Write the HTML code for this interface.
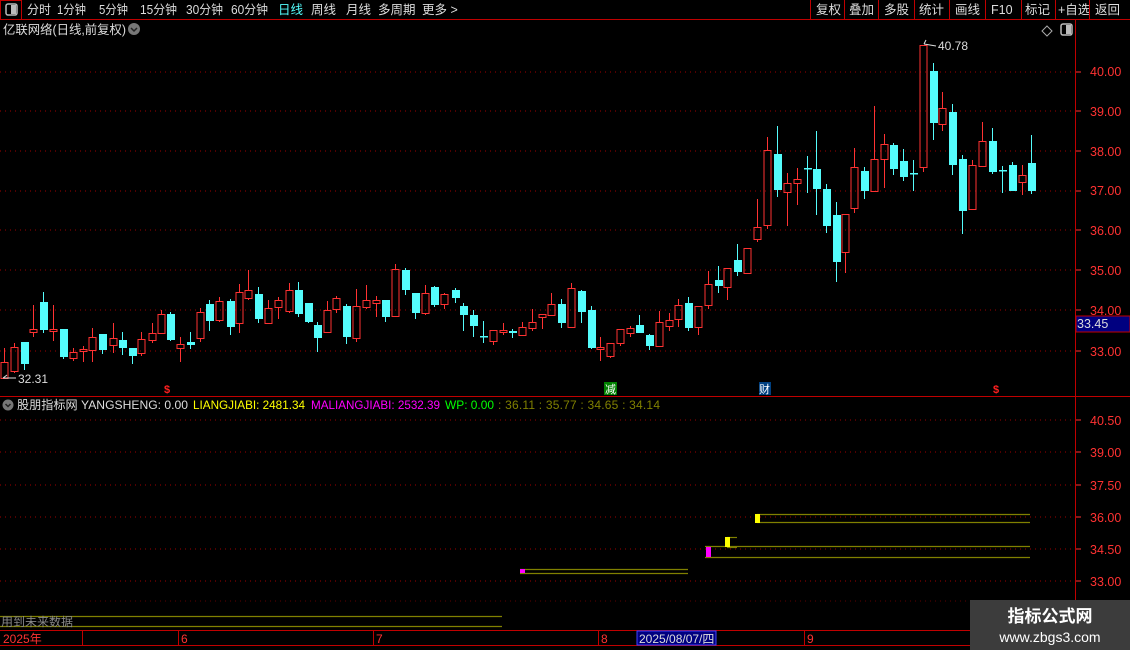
<!DOCTYPE html>
<html><head><meta charset="utf-8"><style>
html,body{margin:0;padding:0;background:#000;width:1130px;height:650px;overflow:hidden;font-family:"Liberation Sans","Noto Sans CJK SC",sans-serif;}
svg{position:absolute;left:0;top:0}
</style></head><body>
<svg width="1130" height="650" xmlns="http://www.w3.org/2000/svg" font-family="Liberation Sans, Noto Sans CJK SC, sans-serif">
<rect width="1130" height="650" fill="#000"/>
<line x1="0" y1="19.5" x2="1130" y2="19.5" stroke="#c00000"/>
<rect x="0.5" y="0.5" width="21" height="19" fill="none" stroke="#c00000"/>
<rect x="6" y="4" width="11" height="11" rx="2" fill="none" stroke="#bbb" stroke-width="1.5"/><rect x="11" y="5" width="5" height="9" fill="#bbb"/>
<g font-size="12.5" fill="#ddd">
<text x="27" y="14" textLength="24" lengthAdjust="spacingAndGlyphs">分时</text><text x="57" y="14" textLength="29" lengthAdjust="spacingAndGlyphs">1分钟</text><text x="99" y="14" textLength="29" lengthAdjust="spacingAndGlyphs">5分钟</text><text x="140" y="14" textLength="37" lengthAdjust="spacingAndGlyphs">15分钟</text><text x="186" y="14" textLength="37" lengthAdjust="spacingAndGlyphs">30分钟</text><text x="231" y="14" textLength="37" lengthAdjust="spacingAndGlyphs">60分钟</text>
<text x="278" y="14" fill="#54fcfc">日线</text><text x="311" y="14">周线</text><text x="346" y="14">月线</text><text x="378" y="14">多周期</text><text x="422" y="14">更多 &gt;</text>
<text x="816" y="14">复权</text><text x="849" y="14">叠加</text><text x="884" y="14">多股</text><text x="919" y="14">统计</text><text x="955" y="14">画线</text><text x="991" y="14">F10</text><text x="1025" y="14">标记</text><text x="1058" y="14">+自选</text><text x="1095" y="14">返回</text>
</g>
<g stroke="#c00000"><line x1="810.5" y1="0" x2="810.5" y2="19"/><line x1="844.5" y1="0" x2="844.5" y2="19"/><line x1="878.5" y1="0" x2="878.5" y2="19"/><line x1="914.5" y1="0" x2="914.5" y2="19"/><line x1="949.5" y1="0" x2="949.5" y2="19"/><line x1="985.5" y1="0" x2="985.5" y2="19"/><line x1="1021.5" y1="0" x2="1021.5" y2="19"/><line x1="1055.5" y1="0" x2="1055.5" y2="19"/><line x1="1089.5" y1="0" x2="1089.5" y2="19"/></g>
<text x="3" y="34" font-size="12.5" fill="#ddd" textLength="123" lengthAdjust="spacingAndGlyphs">亿联网络(日线,前复权)</text>
<circle cx="134" cy="29" r="6" fill="#777"/><path d="M131 28 L134 31 L137 28" stroke="#222" stroke-width="1.5" fill="none"/>
<path d="M1047 26 L1052 31 L1047 36 L1042 31 Z" fill="none" stroke="#aaa"/>
<rect x="1061" y="24" width="11" height="11" rx="2" fill="none" stroke="#bbb" stroke-width="1.5"/><rect x="1066" y="25" width="5" height="9" fill="#bbb"/>
<line x1="1075.5" y1="20" x2="1075.5" y2="630" stroke="#c00000"/>
<line x1="0" y1="396.5" x2="1130" y2="396.5" stroke="#c00000"/>
<line x1="0" y1="630.5" x2="1130" y2="630.5" stroke="#c00000"/>
<line x1="0" y1="645.5" x2="1130" y2="645.5" stroke="#c00000"/>
<g stroke="#a00000" stroke-dasharray="1,4">
<line x1="0" y1="72" x2="1075" y2="72"/><line x1="0" y1="111" x2="1075" y2="111"/><line x1="0" y1="151" x2="1075" y2="151"/><line x1="0" y1="191" x2="1075" y2="191"/><line x1="0" y1="230" x2="1075" y2="230"/><line x1="0" y1="270" x2="1075" y2="270"/><line x1="0" y1="310" x2="1075" y2="310"/><line x1="0" y1="351" x2="1075" y2="351"/>
<line x1="0" y1="420" x2="1075" y2="420"/><line x1="0" y1="452" x2="1075" y2="452"/><line x1="0" y1="485" x2="1075" y2="485"/><line x1="0" y1="517" x2="1075" y2="517"/><line x1="0" y1="549" x2="1075" y2="549"/><line x1="0" y1="581" x2="1075" y2="581"/>
</g>
<g font-size="12.5" fill="#ff3232">
<text x="1090" y="76">40.00</text><text x="1090" y="116">39.00</text><text x="1090" y="156">38.00</text><text x="1090" y="195">37.00</text><text x="1090" y="235">36.00</text><text x="1090" y="275">35.00</text><text x="1090" y="315">34.00</text><text x="1090" y="356">33.00</text>
<text x="1090" y="425">40.50</text><text x="1090" y="457">39.00</text><text x="1090" y="490">37.50</text><text x="1090" y="522">36.00</text><text x="1090" y="554">34.50</text><text x="1090" y="586">33.00</text>
</g>
<g stroke="#ff3232"><line x1="1076" y1="72" x2="1081" y2="72"/><line x1="1076" y1="111" x2="1081" y2="111"/><line x1="1076" y1="151" x2="1081" y2="151"/><line x1="1076" y1="191" x2="1081" y2="191"/><line x1="1076" y1="230" x2="1081" y2="230"/><line x1="1076" y1="270" x2="1081" y2="270"/><line x1="1076" y1="310" x2="1081" y2="310"/><line x1="1076" y1="351" x2="1081" y2="351"/><line x1="1076" y1="420" x2="1081" y2="420"/><line x1="1076" y1="452" x2="1081" y2="452"/><line x1="1076" y1="485" x2="1081" y2="485"/><line x1="1076" y1="517" x2="1081" y2="517"/><line x1="1076" y1="549" x2="1081" y2="549"/><line x1="1076" y1="581" x2="1081" y2="581"/></g>
<rect x="1076" y="316" width="54" height="16" fill="#000080" stroke="#c00000"/>
<text x="1077" y="328" font-size="12.5" fill="#ddd">33.45</text>
<g id="candles"></g>
<text x="18" y="383" font-size="12" fill="#ddd">32.31</text><path d="M3 378 L16 378 M3 378 L7 375" stroke="#ddd" fill="none"/>
<text x="938" y="50" font-size="12" fill="#ddd">40.78</text><path d="M924 44 L936 46 M924 44 L926 40" stroke="#ddd" fill="none"/>
<text x="164" y="393" font-size="11" fill="#ff2020" font-weight="bold">$</text>
<text x="993" y="393" font-size="11" fill="#ff2020" font-weight="bold">$</text>
<rect x="604" y="382" width="13" height="13" fill="#008000"/><text x="605" y="393" font-size="11" fill="#fff">减</text>
<rect x="759" y="382" width="12" height="13" fill="#004080"/><text x="759" y="393" font-size="11" fill="#fff">财</text>
<circle cx="8" cy="405" r="5.5" fill="#777"/><path d="M5.5 404 L8 406.5 L10.5 404" stroke="#222" stroke-width="1.5" fill="none"/>
<g font-size="12">
<text x="17" y="409" fill="#ddd" textLength="171" lengthAdjust="spacingAndGlyphs">股朋指标网 YANGSHENG: 0.00</text>
<text x="193" y="409" fill="#ffff00" textLength="112" lengthAdjust="spacingAndGlyphs">LIANGJIABI: 2481.34</text>
<text x="311" y="409" fill="#ff00ff" textLength="129" lengthAdjust="spacingAndGlyphs">MALIANGJIABI: 2532.39</text>
<text x="445" y="409" fill="#00ff00" textLength="49" lengthAdjust="spacingAndGlyphs">WP: 0.00</text>
<text x="498" y="409" fill="#808000" textLength="162" lengthAdjust="spacing">: 36.11 : 35.77 : 34.65 : 34.14</text>
</g>
<g stroke="#808000" stroke-width="1.2">
<line x1="757" y1="514.5" x2="1030" y2="514.5"/><line x1="757" y1="522.5" x2="1030" y2="522.5"/>
<line x1="727" y1="537.5" x2="737" y2="537.5"/><line x1="727" y1="547.5" x2="737" y2="547.5"/>
<line x1="705" y1="546.5" x2="1030" y2="546.5"/><line x1="705" y1="557.5" x2="1030" y2="557.5"/>
<line x1="520" y1="569.5" x2="688" y2="569.5"/><line x1="520" y1="573.5" x2="688" y2="573.5"/>
<line x1="0" y1="616.5" x2="502" y2="616.5"/><line x1="0" y1="626.5" x2="502" y2="626.5"/>
</g>
<rect x="755" y="514" width="5" height="9" fill="#ffff00"/>
<rect x="725" y="537" width="5" height="10" fill="#ffff00"/>
<rect x="706" y="547" width="5" height="10" fill="#ff00ff"/>
<rect x="520" y="569" width="5" height="4" fill="#ff00ff"/>
<line x1="0" y1="601" x2="1075" y2="601" stroke="#a00000" stroke-dasharray="1,4" opacity="0.6"/>
<text x="1" y="626" font-size="12" fill="#888">用到未来数据</text>
<g stroke="#c00000"><line x1="82.5" y1="630" x2="82.5" y2="645"/><line x1="178.5" y1="630" x2="178.5" y2="645"/><line x1="373.5" y1="630" x2="373.5" y2="645"/><line x1="598.5" y1="630" x2="598.5" y2="645"/><line x1="804.5" y1="630" x2="804.5" y2="645"/></g>
<g font-size="12" fill="#ff3232"><text x="3" y="643">2025年</text><text x="181" y="643">6</text><text x="376" y="643">7</text><text x="601" y="643">8</text><text x="807" y="643">9</text></g>
<rect x="637" y="631" width="79" height="14" fill="#000080" stroke="#4040ff"/>
<text x="639" y="643" font-size="12" fill="#ddd">2025/08/07/四</text>
<rect x="970" y="600" width="160" height="50" fill="#3c3c3c"/>
<text x="1050" y="622" font-size="17" font-weight="bold" fill="#fff" text-anchor="middle">指标公式网</text>
<text x="1050" y="642" font-size="14" fill="#fff" text-anchor="middle">www.zbgs3.com</text>
</svg>
<script>
var D=[
[4,362,378,348,378,'r'],[14,347,371,343,373,'r'],[24,342,364,342,370,'c'],[33,329,332,305,337,'r'],[43,302,330,292,333,'c'],[53,329,331,305,341,'r'],[63,329,357,329,359,'c'],[73,352,358,348,361,'r'],[83,349,351,346,362,'r'],[92,337,350,328,362,'r'],[102,334,350,334,354,'c'],[113,338,345,323,353,'r'],[122,340,348,332,355,'c'],[132,348,356,348,364,'c'],[141,339,353,332,356,'r'],[152,333,340,323,343,'r'],[161,314,333,310,333,'r'],[170,314,340,312,341,'c'],[180,344,348,337,362,'r'],[190,342,345,332,349,'c'],[200,312,338,308,342,'r'],[209,304,321,300,331,'c'],[219,301,320,297,322,'r'],[230,301,327,299,335,'c'],[239,292,323,284,333,'r'],[248,290,298,270,300,'r'],[258,294,319,287,323,'c'],[268,308,323,300,324,'r'],[278,300,307,297,319,'r'],[289,290,311,283,313,'r'],[298,290,314,282,317,'c'],[308,303,322,303,323,'c'],[317,325,338,322,352,'c'],[327,310,332,301,332,'r'],[336,298,309,296,313,'r'],[346,306,337,304,344,'c'],[356,306,338,289,342,'r'],[366,300,307,285,309,'r'],[376,300,303,296,317,'r'],[385,300,317,300,322,'c'],[395,269,316,264,316,'r'],[405,270,290,268,295,'c'],[415,293,313,293,319,'c'],[425,293,313,285,315,'r'],[434,287,305,286,307,'c'],[444,294,304,293,309,'r'],[455,290,298,288,303,'c'],[463,306,315,303,331,'c'],[473,315,326,310,337,'c'],[483,336,336,321,343,'c'],[493,330,341,330,345,'r'],[503,330,332,323,335,'r'],[512,331,333,329,338,'c'],[522,327,335,322,336,'r'],[532,322,328,309,331,'r'],
[542,314,317,314,329,'r'],[551,304,315,293,315,'r'],[561,304,323,299,328,'c'],[571,288,327,283,327,'r'],[581,291,312,290,323,'c'],[591,310,348,306,349,'c'],[600,347,349,337,361,'r'],[610,343,356,343,358,'r'],[620,329,343,329,346,'r'],[630,328,333,326,337,'r'],[639,325,333,315,333,'c'],[649,335,346,334,350,'c'],[659,322,346,311,346,'r'],[669,320,326,313,331,'r'],[678,305,319,299,327,'r'],[688,303,328,297,331,'c'],[698,306,327,306,335,'r'],[708,284,305,271,309,'r'],[718,280,286,266,293,'c'],[727,268,287,268,300,'r'],[737,260,272,244,276,'c'],[747,248,273,248,274,'r'],
[757,227,239,199,242,'r'],[767,150,225,137,229,'r'],[777,154,190,126,197,'c'],[787,183,192,173,226,'r'],[797,179,183,168,205,'r'],[807,168,168,156,193,'c'],[816,169,189,131,215,'c'],[826,189,226,184,233,'c'],[836,215,262,202,282,'c'],[845,214,252,214,273,'r'],[854,167,208,148,213,'r'],[864,171,191,167,199,'c'],[874,159,191,106,191,'r'],[884,144,159,134,188,'r'],[893,145,169,143,175,'c'],[903,161,177,149,181,'c'],[913,173,173,160,191,'c'],[923,45,167,45,172,'r'],[933,71,123,63,140,'c'],[942,108,124,92,131,'r'],[952,112,165,104,175,'c'],[962,159,211,155,234,'c'],[972,165,209,160,210,'r'],[982,141,166,122,166,'r'],[992,141,172,128,174,'c'],[1002,170,170,166,193,'c'],[1012,165,191,162,191,'c'],[1022,175,182,165,195,'r'],[1031,163,191,135,194,'c']];
var g=document.getElementById('candles'),s='';
D.forEach(function(d){var x=d[0],t=d[1],b=d[2],h=d[3],l=d[4],col;
if(d[5]=='r'){col='#ff3232';
 if(b-t<2){s+='<line x1="'+x+'.5" y1="'+h+'" x2="'+x+'.5" y2="'+l+'" stroke="'+col+'"/><rect x="'+(x-3)+'" y="'+t+'" width="8" height="2" fill="'+col+'"/>';}
 else{s+='<line x1="'+x+'.5" y1="'+h+'" x2="'+x+'.5" y2="'+t+'" stroke="'+col+'"/><line x1="'+x+'.5" y1="'+b+'" x2="'+x+'.5" y2="'+l+'" stroke="'+col+'"/><rect x="'+(x-3)+'" y="'+t+'.5" width="7" height="'+(b-t)+'" fill="none" stroke="'+col+'"/>';}}
else{col='#54fcfc';
 s+='<line x1="'+x+'.5" y1="'+h+'" x2="'+x+'.5" y2="'+l+'" stroke="'+col+'"/><rect x="'+(x-3)+'" y="'+t+'" width="8" height="'+Math.max(b-t,1.5)+'" fill="'+col+'"/>';}
});
g.innerHTML=s;
</script>
</body></html>
